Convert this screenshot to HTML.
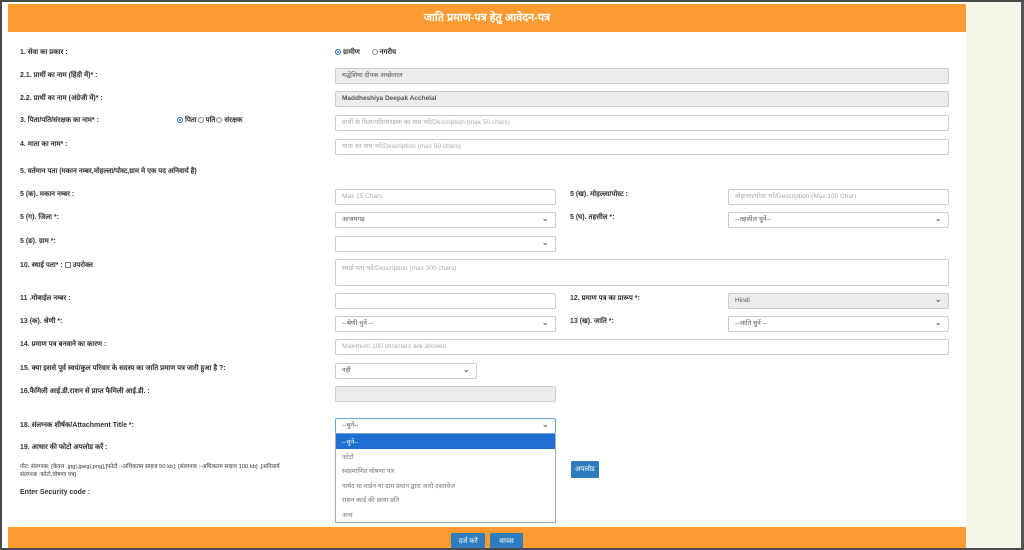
<!DOCTYPE html>
<html><head><meta charset="utf-8"><style>
*{margin:0;padding:0;box-sizing:border-box}
body{width:1024px;height:550px;position:relative;overflow:hidden;background:#fff;font-family:"Liberation Sans","Noto Sans CJK SC",sans-serif;font-size:7px;color:#333}
.a{position:absolute}
.frame{left:0;top:0;width:1024px;height:550px;border-top:2px solid #4a4a4a;border-left:2px solid #4a4a4a;border-bottom:2px solid #4a4a4a;border-right:3px solid #555}
.lbl{position:absolute;font-weight:bold;font-size:7px;color:#333;white-space:nowrap}
.in{position:absolute;border:1px solid #ccc;border-radius:2px;background:#fff;height:16px;font-size:6.5px;color:#aaa;padding:0 6px;line-height:14px;white-space:nowrap}
.g{background:#ececec;color:#555}
.sel{color:#555}
.sel::after{content:"⌄";position:absolute;right:6px;top:-2px;font-size:9px;color:#444}
.btn{position:absolute;background:#2e7bbf;color:#fff;font-size:7px;text-align:center;border-radius:1px}
.rad{display:inline-block;width:6px;height:6px;border-radius:50%;border:1px solid #888;vertical-align:-1px;margin-right:2px}
.rad.on{background:#2a6fd6;border-color:#2a6fd6;box-shadow:inset 0 0 0 1px #fff}
.opt{position:absolute;left:336px;width:219px;height:14.6px;padding:3px 6px;font-size:6.5px;color:#777}
</style></head><body>
<div class="a" style="left:966px;top:0;width:58px;height:550px;background:#f4f6ea"></div>
<div class="a" style="left:8px;top:4px;width:958px;height:28px;background:#fd9a32;color:#fff;font-weight:bold;font-size:11px;text-align:center;line-height:28px">जाति प्रमाण-पत्र हेतु आवेदन-पत्र</div>
<div class="a" style="left:8px;top:527px;width:958px;height:23px;background:#fd9a32"></div>

<div class="lbl" style="left:20px;top:48px">1. सेवा का प्रकार :</div>
<div class="a" style="left:335px;top:48px;font-size:7px;font-weight:bold"><span class="rad on"></span>ग्रामीण &nbsp; &nbsp; &nbsp;<span class="rad"></span>नगरीय</div>

<div class="lbl" style="left:20px;top:71px">2.1. प्रार्थी का नाम (हिंदी में)* :</div>
<div class="in g" style="left:335px;top:68px;width:614px">मद्धेशिया दीपक अच्छेलाल</div>
<div class="lbl" style="left:20px;top:94px">2.2. प्रार्थी का नाम (अंग्रेजी में)* :</div>
<div class="in g" style="left:335px;top:91px;width:614px;font-weight:bold">Maddheshiya Deepak Acchelal</div>

<div class="lbl" style="left:20px;top:116px">3. पिता/पति/संरक्षक का नाम* :</div>
<div class="a" style="left:177px;top:116px;font-weight:bold"><span class="rad on"></span>पिता<span class="rad" style="margin-left:1px"></span>पति<span class="rad" style="margin-left:1px"></span>संरक्षक</div>
<div class="in" style="left:335px;top:115px;width:614px">प्रार्थी के पिता/पति/संरक्षक का नाम भरें/Description (max 50 chars)</div>
<div class="lbl" style="left:20px;top:140px">4. माता का नाम* :</div>
<div class="in" style="left:335px;top:139px;width:614px">माता का नाम भरें/Description (max 50 chars)</div>

<div class="lbl" style="left:20px;top:167px">5. वर्तमान पता (मकान नम्बर,मोहल्ला/पोस्ट,ग्राम मे एक पद अनिवार्य है)</div>
<div class="lbl" style="left:20px;top:190px">5 (क). मकान नम्बर :</div>
<div class="in" style="left:335px;top:189px;width:221px">Max 15 Chars</div>
<div class="lbl" style="left:570px;top:190px">5 (ख). मोहल्ला/पोस्ट :</div>
<div class="in" style="left:728px;top:189px;width:221px">मोहल्ला/पोस्ट भरें/Description (Max 100 Char)</div>

<div class="lbl" style="left:20px;top:213px">5 (ग). जिला *:</div>
<div class="in sel" style="left:335px;top:212px;width:221px">आजमगढ़</div>
<div class="lbl" style="left:570px;top:213px">5 (घ). तहसील *:</div>
<div class="in sel" style="left:728px;top:212px;width:221px">--तहसील चुनें--</div>

<div class="lbl" style="left:20px;top:237px">5 (ङ). ग्राम *:</div>
<div class="in sel" style="left:335px;top:236px;width:221px"></div>

<div class="lbl" style="left:20px;top:261px">10. स्थाई पता* : <span style="display:inline-block;width:6px;height:6px;border:1px solid #777;vertical-align:-1px"></span> उपरोक्त</div>
<div class="in" style="left:335px;top:259px;width:614px;height:27px;line-height:18px">स्थाई पता भरें/Description (max 300 chars)</div>

<div class="lbl" style="left:20px;top:294px">11 .मोबाईल नम्बर :</div>
<div class="in" style="left:335px;top:293px;width:221px"></div>
<div class="lbl" style="left:570px;top:294px">12. प्रमाण पत्र का प्रारूप *:</div>
<div class="in g sel" style="left:728px;top:293px;width:221px">Hindi</div>

<div class="lbl" style="left:20px;top:317px">13 (क). श्रेणी *:</div>
<div class="in sel" style="left:335px;top:316px;width:221px">--श्रेणी चुनें --</div>
<div class="lbl" style="left:570px;top:317px">13 (ख). जाति *:</div>
<div class="in sel" style="left:728px;top:316px;width:221px">--जाति चुनें --</div>

<div class="lbl" style="left:20px;top:340px">14. प्रमाण पत्र बनवाने का कारण :</div>
<div class="in" style="left:335px;top:339px;width:614px">Maximum 100 chracters are allowed.</div>

<div class="lbl" style="left:20px;top:364px">15. क्या इससे पूर्व स्वयं/कुल परिवार के सदस्य का जाति प्रमाण पत्र जारी हुआ है ?:</div>
<div class="in sel" style="left:335px;top:363px;width:142px">नहीं</div>

<div class="lbl" style="left:20px;top:387px">16.फैमिली आई.डी.राशन से प्राप्त फैमिली आई.डी. :</div>
<div class="in g" style="left:335px;top:386px;width:221px"></div>

<div class="lbl" style="left:20px;top:421px">18. संलग्नक शीर्षक/Attachment Title *:</div>
<div class="in sel" style="left:335px;top:418px;width:221px;border-color:#66a3e0">--चुनें--</div>
<div class="lbl" style="left:20px;top:443px">19. आधार की फोटो अपलोड करें :</div>
<div class="lbl" style="left:20px;top:463px;font-weight:normal;font-size:5.8px;line-height:8px">नोट: संलग्नक: [केवल .jpg|.jpeg|.png],[फोटो :-अधिकतम साइज 50 kb], [संलग्नक :-अधिकतम साइज 100 kb] ,[अनिवार्य<br>संलग्नक :फोटो,घोषणा पत्र]</div>
<div class="lbl" style="left:20px;top:489px">Enter Security code :</div>

<div class="a" style="left:335px;top:434px;width:221px;height:89px;border:1px solid #aaa;background:#fff"></div>
<div class="opt" style="top:434px;background:#1f6fd0;color:#fff">--चुनें--</div>
<div class="opt" style="top:448.6px">फोटो</div>
<div class="opt" style="top:463.2px">स्वप्रमाणित घोषणा पत्र</div>
<div class="opt" style="top:477.8px">पार्षद या वार्डन या ग्राम प्रधान द्वारा जारी दस्तावेज</div>
<div class="opt" style="top:492.4px">राशन कार्ड की छाया प्रति</div>
<div class="opt" style="top:507px">अन्य</div>

<div class="btn" style="left:571px;top:461px;width:28px;height:17px;line-height:17px">अपलोड</div>
<div class="btn" style="left:451px;top:533px;width:34px;height:17px;line-height:17px">दर्ज करें</div>
<div class="btn" style="left:490px;top:533px;width:33px;height:17px;line-height:17px">वापस</div>
<div class="a frame"></div>
</body></html>
